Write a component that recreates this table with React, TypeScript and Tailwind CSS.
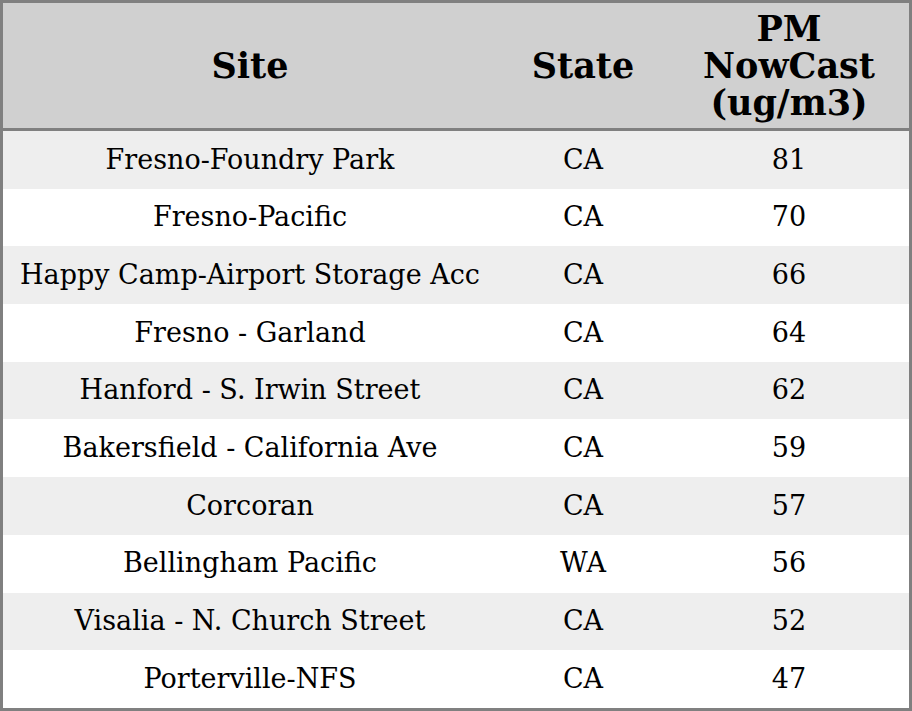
const rows = [
  { site: "Fresno-Foundry Park", state: "CA", pm: 81 },
  { site: "Fresno-Pacific", state: "CA", pm: 70 },
  { site: "Happy Camp-Airport Storage Acc", state: "CA", pm: 66 },
  { site: "Fresno - Garland", state: "CA", pm: 64 },
  { site: "Hanford - S. Irwin Street", state: "CA", pm: 62 },
  { site: "Bakersfield - California Ave", state: "CA", pm: 59 },
  { site: "Corcoran", state: "CA", pm: 57 },
  { site: "Bellingham Pacific", state: "WA", pm: 56 },
  { site: "Visalia - N. Church Street", state: "CA", pm: 52 },
  { site: "Porterville-NFS", state: "CA", pm: 47 },
];

export default function App() {
  return (
    <div className="w-[912px] h-[711px] bg-white font-['DejaVu_Serif',serif] text-black">
      <table className="w-[912px] border-separate border-spacing-0 border-[3px] border-[#808080] table-fixed">
        <thead>
          <tr className="bg-[#d0d0d0]">
            <th className="w-[494px] h-[128px] border-b-[3px] border-[#808080] text-[35px] leading-[37px] font-bold text-center">
              Site
            </th>
            <th className="w-[172px] h-[128px] border-b-[3px] border-[#808080] text-[35px] leading-[37px] font-bold text-center">
              State
            </th>
            <th className="w-[240px] h-[128px] border-b-[3px] border-[#808080] text-[35px] leading-[37px] font-bold text-center px-4">
              PM NowCast (ug/m3)
            </th>
          </tr>
        </thead>
        <tbody>
          {rows.map((r, i) => (
            <tr key={r.site} className={i % 2 === 0 ? "bg-[#eeeeee]" : "bg-white"}>
              <td className="h-[57.7px] p-0 text-[27px] text-center whitespace-nowrap">{r.site}</td>
              <td className="h-[57.7px] p-0 text-[27px] text-center">{r.state}</td>
              <td className="h-[57.7px] p-0 text-[27px] text-center">{r.pm}</td>
            </tr>
          ))}
        </tbody>
      </table>
    </div>
  );
}
